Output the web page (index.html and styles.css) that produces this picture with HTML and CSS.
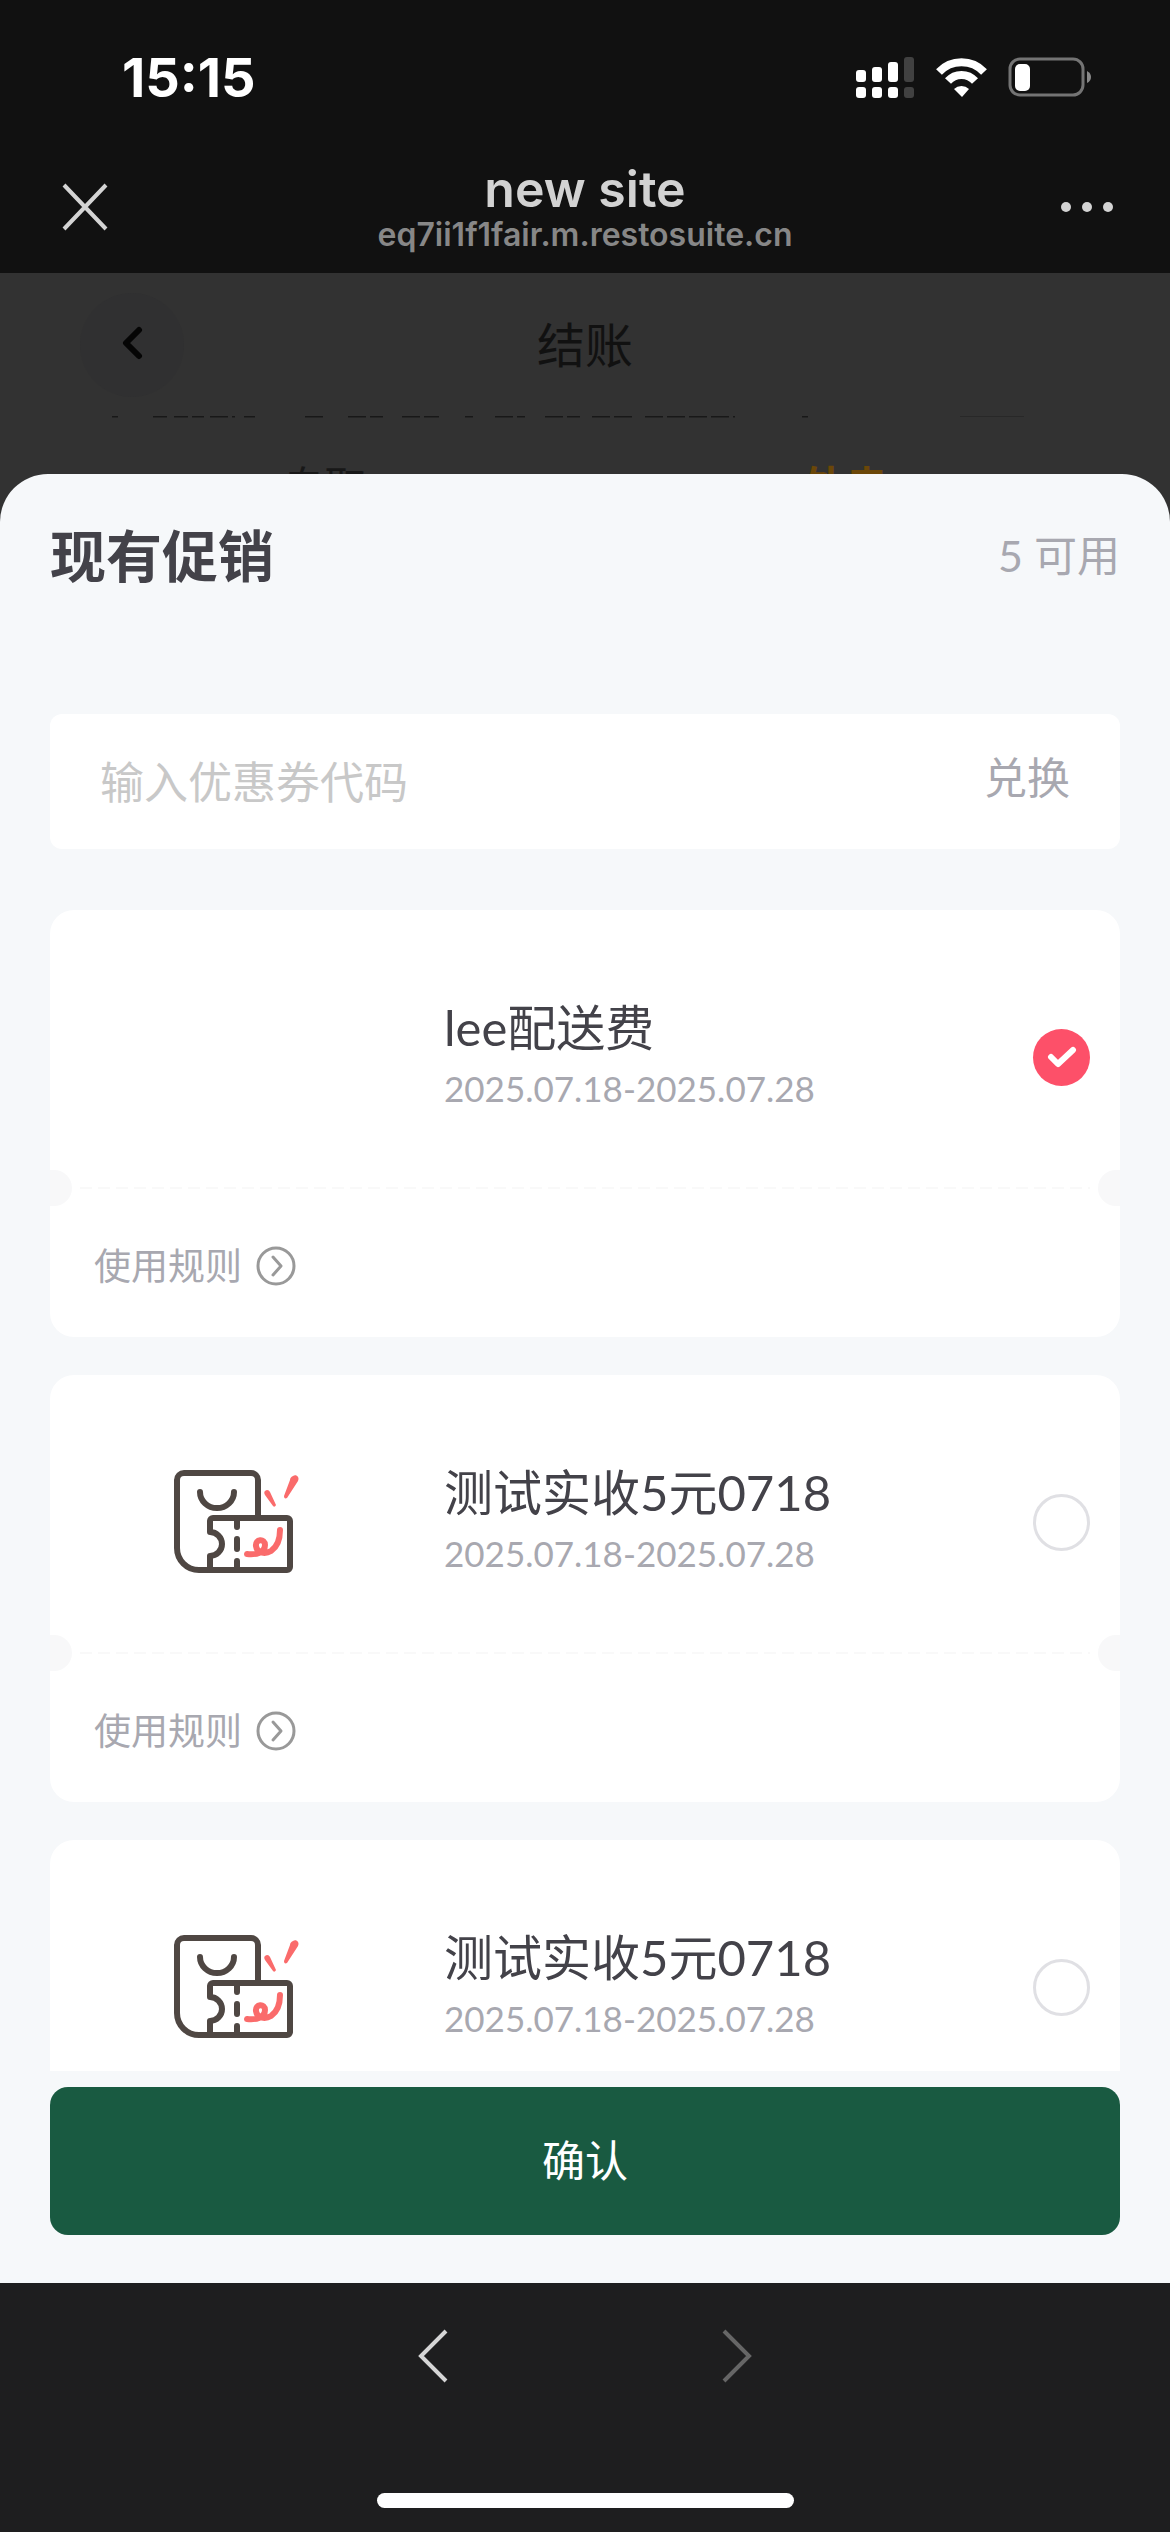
FILE: index.html
```html
<!DOCTYPE html>
<html lang="zh-CN">
<head>
<meta charset="utf-8">
<meta name="viewport" content="width=device-width, initial-scale=1">
<title>new site</title>
<link rel="stylesheet" href="styles.css">
</head>
<body>
<svg width="0" height="0" class="defs" aria-hidden="true">
  <symbol id="coupon" viewBox="0 0 130 108">
    <g fill="none" stroke="#4f4743" stroke-width="6" stroke-linecap="round" stroke-linejoin="round">
      <path d="M86 49V12a7 7 0 0 0-7-7H12a7 7 0 0 0-7 7v68a22 22 0 0 0 22 22h12"/>
      <path d="M28 24a17 16 0 0 0 34 0"/>
      <path d="M38 64V53a3 3 0 0 1 3-3h74a3 3 0 0 1 3 3v46a3 3 0 0 1-3 3H38V88a12 12 0 0 0 0-24"/>
      <path d="M65 52v7M65 71v10M65 93v6"/>
    </g>
    <g fill="none" stroke="#fa6b6b" stroke-width="6" stroke-linecap="round" stroke-linejoin="round">
      <path d="M75 86c8 1 18-1 18-9 0-7-10-6-9 1 1 8 10 8 15 5 6-4 9-12 9-21"/>
    </g>
    <path d="M93 23c2-2 4-1 5 1l6 13c-1 2-2 2-3 1l-8-11c-1-2-1-3 0-4zM121 8c3-2 7 1 5 5l-11 17c-2 1-3 0-3-2l6-16c0-2 1-3 3-4z" fill="#fa6b6b"/>
  </symbol>
</svg>
<div class="app">
  <div class="status">
    <time class="clock">15:15</time>
    <svg class="status-icons" width="236" height="46" viewBox="0 0 236 46" aria-hidden="true">
      <g fill="#fff">
        <rect y="15" width="10" height="12" rx="3"/><rect x="16" y="12" width="10" height="15" rx="3"/><rect x="32" y="7" width="10" height="20" rx="3"/>
        <rect y="32" width="10" height="11" rx="3"/><rect x="16" y="32" width="10" height="11" rx="3"/><rect x="32" y="32" width="10" height="11" rx="3"/>
      </g>
      <g fill="#414141"><rect x="48" y="2" width="10" height="25" rx="3"/><rect x="48" y="32" width="10" height="11" rx="3"/></g>
      <g fill="none" stroke="#fff" stroke-width="8">
        <path d="M83 17a31 31 0 0 1 45 0"/><path d="M92 26a18 18 0 0 1 27 0"/>
      </g>
      <path d="M98 34a11 11 0 0 1 15 0l-7 8z" fill="#fff"/>
      <rect x="154" y="4" width="73" height="36" rx="10" fill="none" stroke="#747474" stroke-width="3"/>
      <rect x="159" y="9" width="15" height="27" rx="5" fill="#fff"/>
      <path d="M231 16q4 2 4 6t-4 6z" fill="#888"/>
    </svg>
  </div>
  <header class="browser-bar">
    <button class="icon-button" aria-label="关闭"><svg width="58" height="48" viewBox="0 0 58 48"><path d="M8 2l42 44M50 2L8 46" stroke="#d4d4d4" stroke-width="4"/></svg></button>
    <div class="site">
      <h1 class="site-name">new site</h1>
      <p class="site-url">eq7ii1f1fair.m.restosuite.cn</p>
    </div>
    <button class="icon-button end" aria-label="更多"><svg width="54" height="12" viewBox="0 0 54 12" fill="#d4d4d4"><circle cx="6" cy="6" r="5"/><circle cx="27" cy="6" r="5"/><circle cx="48" cy="6" r="5"/></svg></button>
  </header>
  <main class="page">
    <div class="checkout-bar">
      <button class="back" aria-label="返回"><svg width="22" height="34" viewBox="0 0 22 34"><path d="M18 4L5 17l13 13" fill="none" stroke="#050505" stroke-width="6" stroke-linecap="round" stroke-linejoin="round"/></svg></button>
      <h2 class="checkout-title">结账</h2>
    </div>
    <div class="peek" aria-hidden="true">
      <svg class="peek-line" viewBox="0 0 1170 4" height="4" preserveAspectRatio="none"><path d="M112 0h6M153 0h14M174 0h14M192 0h12M210 0h25M244 0h11M305 0h18M348 0h35M402 0h37M465 0h8M495 0h30M545 0h35M592 0h44M645 0h90M802 0h6" stroke="#181818" stroke-width="3" stroke-dasharray="18 4"/><path d="M960 0h64" stroke="#282828" stroke-width="2"/></svg>
      <div class="peek-tabs"><span>自取</span><span class="active">外卖</span></div>
    </div>
    <section class="sheet" aria-label="现有促销">
      <div class="sheet-head">
        <h2 class="sheet-title">现有促销</h2>
        <span class="available">5 可用</span>
      </div>
      <form class="redeem">
        <input class="code" type="text" placeholder="输入优惠券代码" aria-label="输入优惠券代码">
        <button class="redeem-button" type="button">兑换</button>
      </form>
      <div class="coupons">
        <article class="coupon">
          <label class="offer">
            <span class="thumb"></span>
            <span class="info"><span class="name">lee配送费</span><span class="dates">2025.07.18-2025.07.28</span></span>
            <span class="pick"><input class="radio" type="radio" name="coupon" checked><svg class="tick" width="30" height="22" viewBox="0 0 30 22"><path d="M4 11l7 7L26 4" fill="none" stroke="#fff" stroke-width="6" stroke-linecap="round" stroke-linejoin="round"/></svg></span>
          </label>
          <div class="tear"></div>
          <button class="rules">使用规则<svg width="40" height="40" viewBox="0 0 40 40"><g fill="none" stroke="#999" stroke-width="3"><circle cx="20" cy="20" r="18"/><path d="M17 11l8 9-8 9" stroke-linecap="round" stroke-linejoin="round"/></g></svg></button>
        </article>
        <article class="coupon">
          <label class="offer">
            <span class="thumb"><svg width="130" height="108"><use href="#coupon"/></svg></span>
            <span class="info"><span class="name">测试实收5元0718</span><span class="dates">2025.07.18-2025.07.28</span></span>
            <span class="pick"><input class="radio" type="radio" name="coupon"></span>
          </label>
          <div class="tear"></div>
          <button class="rules">使用规则<svg width="40" height="40" viewBox="0 0 40 40"><g fill="none" stroke="#999" stroke-width="3"><circle cx="20" cy="20" r="18"/><path d="M17 11l8 9-8 9" stroke-linecap="round" stroke-linejoin="round"/></g></svg></button>
        </article>
        <article class="coupon">
          <label class="offer">
            <span class="thumb"><svg width="130" height="108"><use href="#coupon"/></svg></span>
            <span class="info"><span class="name">测试实收5元0718</span><span class="dates">2025.07.18-2025.07.28</span></span>
            <span class="pick"><input class="radio" type="radio" name="coupon"></span>
          </label>
        </article>
      </div>
      <button class="confirm">确认</button>
    </section>
  </main>
  <footer class="bottom-bar">
    <nav class="history">
      <button class="icon-button" aria-label="后退"><svg width="34" height="54" viewBox="0 0 34 54"><path d="M30 2L5 27l25 25" fill="none" stroke="#d6d6d6" stroke-width="4"/></svg></button>
      <button class="icon-button" aria-label="前进"><svg width="34" height="54" viewBox="0 0 34 54"><path d="M4 2l25 25L4 52" fill="none" stroke="#666" stroke-width="4"/></svg></button>
    </nav>
    <div class="home"></div>
  </footer>
</div>
</body>
</html>
```

FILE: styles.css
```css
* { box-sizing: border-box; }
body {
  margin: 0;
  font-family: Lato, "Noto Sans CJK SC", sans-serif;
  color: #434249;
  background: #111;
}
h1, h2, p { margin: 0; }
button, input { font: inherit; border: 0; background: none; padding: 0; margin: 0; }
button { color: inherit; }
svg { display: block; }
.defs { position: absolute; }

.app { display: flex; flex-direction: column; height: 100vh; }

.status {
  display: flex;
  align-items: center;
  justify-content: space-between;
  height: 156px;
  padding: 0 78px 0 122px;
}
.clock { font: 700 54px/60px Inter, sans-serif; color: #fff; }

.browser-bar {
  display: grid;
  grid-template-columns: 1fr auto 1fr;
  align-items: center;
  height: 117px;
  padding: 0 56px 16px;
}
.icon-button.end { justify-self: end; }
.browser-bar .icon-button:first-child { justify-self: start; }
.site { text-align: center; font-family: Inter, sans-serif; }
.site-name { font-size: 50px; line-height: 56px; font-weight: 600; color: #d2d2d2; }
.site-url { font-size: 32px; line-height: 36px; font-weight: 600; color: #878787; }

.page {
  flex: 1;
  min-height: 0;
  display: flex;
  flex-direction: column;
  background: #323232;
}
.checkout-bar {
  display: grid;
  grid-template-columns: 1fr auto 1fr;
  align-items: center;
  height: 143px;
  padding: 0 80px;
}
.back {
  display: flex;
  align-items: center;
  justify-content: center;
  width: 104px;
  height: 104px;
  padding-bottom: 4px;
  border-radius: 50%;
  background: #303031;
}
.checkout-title { font-size: 48px; line-height: 56px; font-weight: 400; color: #111; }

.peek { height: 58px; overflow: hidden; }
.peek-line { width: 100%; }
.peek-tabs {
  display: grid;
  grid-template-columns: 1fr 1fr;
  padding: 36px 64px 0;
  font-size: 42px;
  line-height: 60px;
  text-align: center;
  color: #181818;
}
.peek-tabs .active { color: #6b4708; font-weight: 700; }

.sheet {
  flex: 1;
  min-height: 0;
  display: flex;
  flex-direction: column;
  padding: 46px 50px 48px;
  border-radius: 48px 48px 0 0;
  background: #f6f8fa;
}
.sheet-head {
  display: flex;
  align-items: center;
  justify-content: space-between;
  margin-bottom: 122px;
}
.sheet-title { font-size: 56px; line-height: 72px; font-weight: 700; }
.available { font-size: 43px; line-height: 72px; color: #a8a8b0; }

.redeem {
  display: flex;
  align-items: center;
  height: 135px;
  margin-bottom: 61px;
  padding: 0 50px;
  border-radius: 12px;
  background: #fff;
}
.code { flex: 1; min-width: 0; font-size: 44px; line-height: 64px; outline: 0; color: #434249; }
.code::placeholder { color: #c8c8c8; opacity: 1; }
.redeem-button { font-size: 43px; line-height: 64px; padding-bottom: 8px; color: #a8a8b0; }

.coupons {
  flex: 1;
  min-height: 0;
  display: flex;
  flex-direction: column;
  gap: 38px;
  overflow: hidden;
}
.coupon { flex: none; border-radius: 24px; background: #fff; }
.offer {
  display: grid;
  grid-template-columns: 394px 1fr auto;
  align-items: center;
  height: 260px;
  padding: 34px 30px 0 0;
}
.thumb { padding-left: 122px; }
.info { display: flex; flex-direction: column; padding-bottom: 4px; }
.name { font-size: 49px; line-height: 66px; }
.dates { font-size: 35px; line-height: 56px; color: #a8a8b0; }
.pick { display: grid; place-items: center; }
.pick > * { grid-area: 1 / 1; }
.radio {
  appearance: none;
  width: 57px;
  height: 57px;
  border: 3px solid #e0e0e4;
  border-radius: 50%;
}
.radio:checked { border: 0; background: #fd5069; }

.tear {
  display: flex;
  align-items: center;
  justify-content: space-between;
  height: 36px;
  background: repeating-linear-gradient(90deg, #f9f9f9 0 12px, #fff 12px 18px) center / calc(100% - 60px) 2px no-repeat;
}
.tear::before, .tear::after {
  content: "";
  width: 22px;
  height: 36px;
  background: #f8f8f9;
}
.tear::before { border-radius: 0 20px 20px 0; }
.tear::after { border-radius: 20px 0 0 20px; }
.rules {
  display: flex;
  align-items: center;
  gap: 14px;
  height: 131px;
  padding: 0 44px 12px;
  font-size: 37px;
  line-height: 40px;
  color: #a8a8b0;
}

.confirm {
  flex: none;
  height: 148px;
  margin-top: 16px;
  padding-bottom: 6px;
  border-radius: 18px;
  font-size: 43px;
  color: #fff;
  background: #195a41;
}

.bottom-bar {
  display: flex;
  flex-direction: column;
  align-items: center;
  justify-content: space-between;
  height: 249px;
  padding: 46px 0 24px;
  background: #1e1e1f;
}
.history { display: flex; gap: 270px; }
.home { width: 417px; max-width: 60%; height: 15px; border-radius: 8px; background: #fff; }
```
